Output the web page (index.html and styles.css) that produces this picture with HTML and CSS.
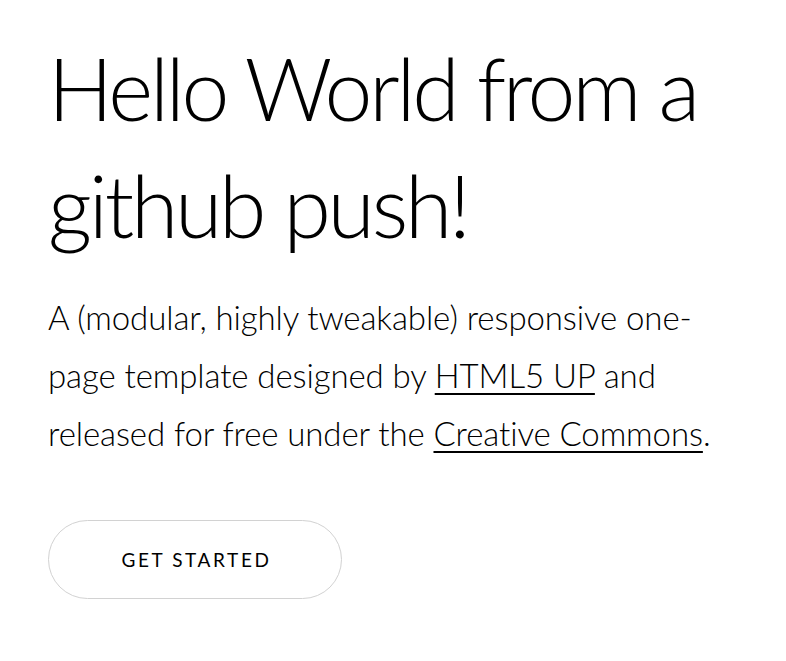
FILE: index.html
```html
<!DOCTYPE html>
<html lang="en">
<head>
<meta charset="utf-8">
<title>Hello World</title>
<link rel="stylesheet" href="styles.css">
</head>
<body>
<section class="intro">
  <h1 class="title">Hello World from a github push!</h1>
  <p class="lead">A (modular, highly tweakable) responsive one-page template designed by <a href="#">HTML5 UP</a> and released for free under the <a href="#">Creative Commons</a>.</p>
  <div class="actions">
    <a class="button" href="#">Get Started</a>
  </div>
</section>
</body>
</html>
```
FILE: styles.css
```css
html, body {
  margin: 0;
  padding: 0;
  background: #ffffff;
}
body {
  font-family: "Lato", "Liberation Sans", sans-serif;
  color: #000000;
}
.intro {
  padding: 29px 48px 0 48px;
  width: 680px;
}
.title {
  margin: 0;
  font-size: 86px;
  font-weight: 300;
  line-height: 117px;
  letter-spacing: -3.2px;
}
.lead {
  margin: 25px 0 0 0;
  font-size: 33px;
  font-weight: 300;
  line-height: 58px;
  letter-spacing: -0.1px;
}
.lead a {
  color: #000000;
  text-decoration: underline;
  text-decoration-thickness: 2px;
  text-underline-offset: 5px;
}
.actions {
  margin-top: 58px;
  display: flex;
}
.button {
  display: flex;
  align-items: center;
  justify-content: center;
  box-sizing: border-box;
  width: 294px;
  height: 79px;
  border: 1.5px solid #d2d2d2;
  border-radius: 40px;
  color: #000000;
  text-decoration: none;
  text-transform: uppercase;
  font-size: 19px;
  font-weight: 400;
  letter-spacing: 2.6px;
  padding-left: 3px;
}
```
